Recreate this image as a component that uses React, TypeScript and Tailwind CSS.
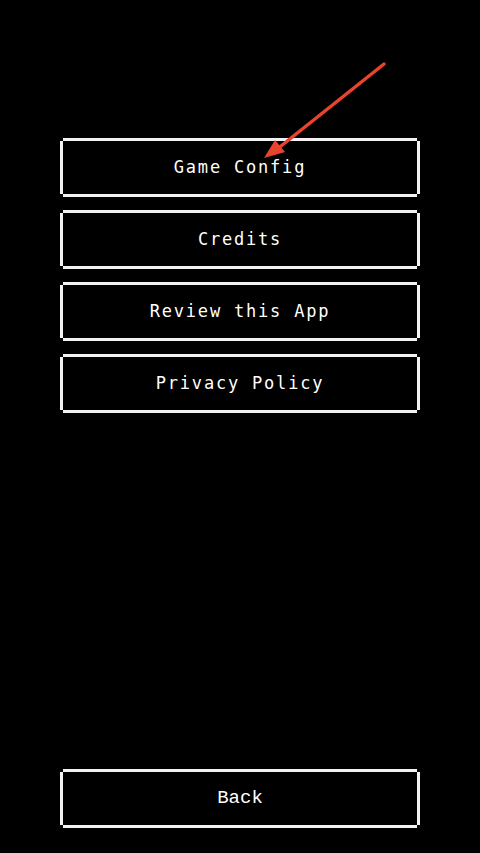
const items = ["Game Config", "Credits", "Review this App", "Privacy Policy"];

const sansMono = '"DejaVu Sans Mono", "Liberation Mono", monospace';
const serifMono = '"Liberation Mono", "DejaVu Sans Mono", monospace';

function PixelButton({ label, serif = false }: { label: string; serif?: boolean }) {
  return (
    <div className="p-[3px] h-[59px]">
      <button
        style={{ fontFamily: serif ? serifMono : sansMono }}
        className={
          serif
            ? "w-full h-full flex items-center justify-center bg-black text-white text-[19px] shadow-[0_-3px_0_0_#f2f2f2,0_3px_0_0_#f2f2f2,-3px_0_0_0_#f2f2f2,3px_0_0_0_#f2f2f2] cursor-pointer"
            : "w-full h-full flex items-center justify-center bg-black text-white text-[17px] tracking-[1.8px] shadow-[0_-3px_0_0_#f2f2f2,0_3px_0_0_#f2f2f2,-3px_0_0_0_#f2f2f2,3px_0_0_0_#f2f2f2] cursor-pointer"
        }
      >
        {label}
      </button>
    </div>
  );
}

export default function App() {
  return (
    <div className="relative h-[853px] w-[480px] bg-black flex flex-col px-[60px] pt-[138px] pb-[25px]">
      <div className="flex flex-col gap-[13px]">
        {items.map((label) => (
          <PixelButton key={label} label={label} />
        ))}
      </div>

      <div className="mt-auto">
        <PixelButton label="Back" serif />
      </div>

      {/* annotation arrow */}
      <svg className="absolute left-0 top-0 pointer-events-none" width="480" height="200" viewBox="0 0 480 200">
        <line x1="384" y1="64" x2="276" y2="150" stroke="#e8432e" strokeWidth="3.5" strokeLinecap="round" />
        <polygon points="264,158 275,140 285,152" fill="#e8432e" />
      </svg>
    </div>
  );
}
